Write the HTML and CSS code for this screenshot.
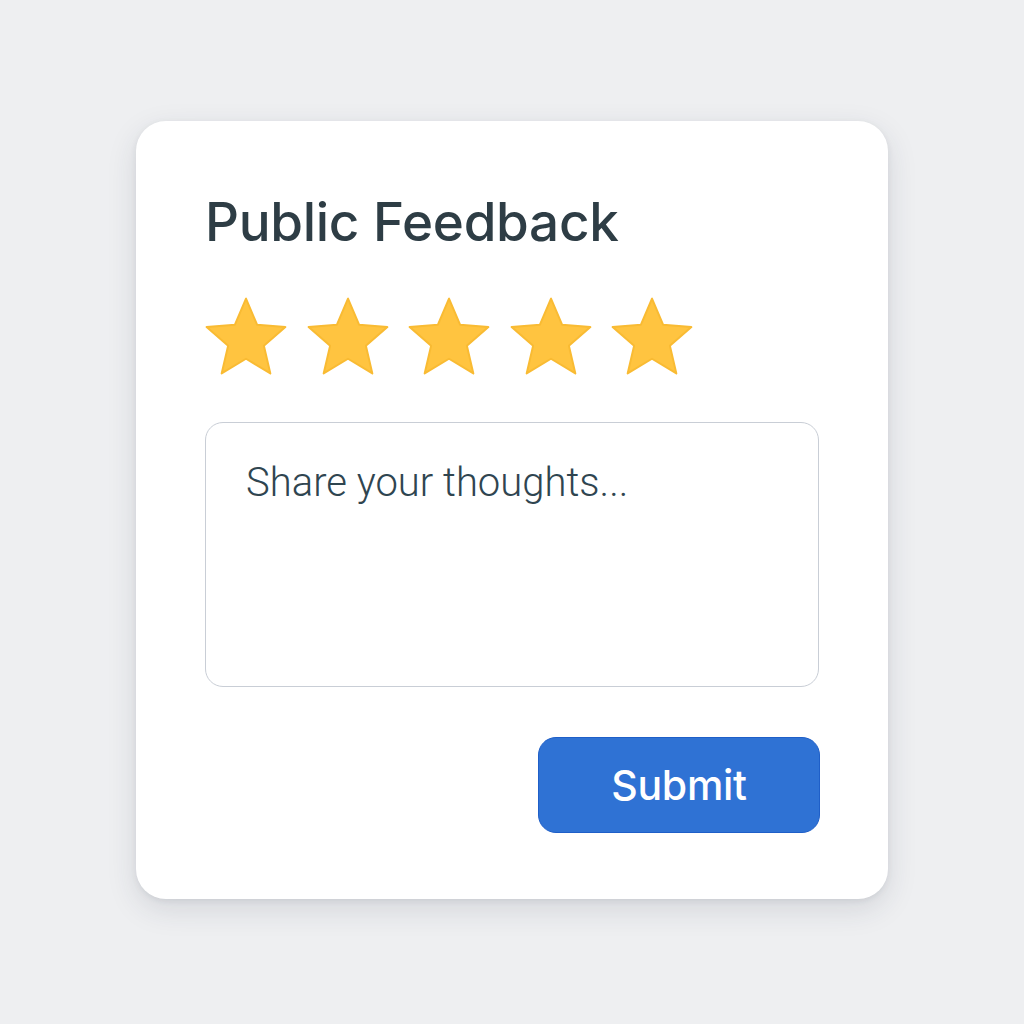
FILE: index.html
```html
<!DOCTYPE html>
<html>
<head>
<meta charset="utf-8">
<link rel="stylesheet" href="styles.css">
</head>
<body>
<div class="page">
  <div class="card">
    <h1 class="title">Public Feedback</h1>
    <div class="stars">
      <svg class="star" viewBox="1.6 1.6 20.8 19.8"><path d="M12 17.27L18.18 21l-1.64-7.03L22 9.24l-7.19-.61L12 2 9.19 8.63 2 9.24l5.46 4.73L5.82 21z"/></svg>
      <svg class="star" viewBox="1.6 1.6 20.8 19.8"><path d="M12 17.27L18.18 21l-1.64-7.03L22 9.24l-7.19-.61L12 2 9.19 8.63 2 9.24l5.46 4.73L5.82 21z"/></svg>
      <svg class="star" viewBox="1.6 1.6 20.8 19.8"><path d="M12 17.27L18.18 21l-1.64-7.03L22 9.24l-7.19-.61L12 2 9.19 8.63 2 9.24l5.46 4.73L5.82 21z"/></svg>
      <svg class="star" viewBox="1.6 1.6 20.8 19.8"><path d="M12 17.27L18.18 21l-1.64-7.03L22 9.24l-7.19-.61L12 2 9.19 8.63 2 9.24l5.46 4.73L5.82 21z"/></svg>
      <svg class="star" viewBox="1.6 1.6 20.8 19.8"><path d="M12 17.27L18.18 21l-1.64-7.03L22 9.24l-7.19-.61L12 2 9.19 8.63 2 9.24l5.46 4.73L5.82 21z"/></svg>
    </div>
    <textarea class="input" placeholder="Share your thoughts..."></textarea>
    <div class="actions">
      <button class="submit">Submit</button>
    </div>
  </div>
</div>
</body>
</html>
```
FILE: styles.css
```css
html, body {
  margin: 0;
  padding: 0;
  background: #eeeff1;
}
.page {
  width: 1024px;
  height: 1024px;
  display: flex;
  justify-content: center;
  padding-top: 121px;
  box-sizing: border-box;
}
.card {
  width: 752px;
  height: 778px;
  box-sizing: border-box;
  background: #ffffff;
  border-radius: 30px;
  box-shadow: 0 10px 30px rgba(40, 50, 70, 0.13), 0 2px 6px rgba(40, 50, 70, 0.08);
  padding: 70px 69px 0 69px;
  display: flex;
  flex-direction: column;
}
.title {
  margin: 0;
  font-family: Inter, "Noto Sans", sans-serif;
  font-weight: 500;
  font-size: 53px;
  line-height: 62px;
  letter-spacing: -0.3px;
  color: #2e3d45;
}
.stars {
  display: flex;
  gap: 19.5px;
  margin-top: 44px;
}
.star {
  width: 82px;
  height: 78px;
  fill: #ffc440;
  stroke: #f9bb33;
  stroke-width: 0.5;
  stroke-linejoin: round;
}
.input {
  margin-top: 47px;
  width: 614px;
  height: 265px;
  box-sizing: border-box;
  border: 1.5px solid #c9ced6;
  border-radius: 18px;
  padding: 36px 40px;
  resize: none;
  font-family: Roboto, sans-serif;
  font-weight: 300;
  font-size: 40px;
  line-height: 48px;
  color: #2f4550;
  background: #fff;
  outline: none;
}
.input::placeholder {
  color: #2f4550;
  opacity: 1;
}
.actions {
  display: flex;
  justify-content: flex-end;
  margin-top: 50px;
  margin-right: -1px;
}
.submit {
  width: 282px;
  height: 96px;
  border-radius: 18px;
  background: #2f72d4;
  border: 1.5px solid #1f5fc8;
  color: #ffffff;
  font-family: Inter, "Noto Sans", sans-serif;
  font-weight: 500;
  font-size: 41px;
  letter-spacing: -0.3px;
  cursor: pointer;
}
```
